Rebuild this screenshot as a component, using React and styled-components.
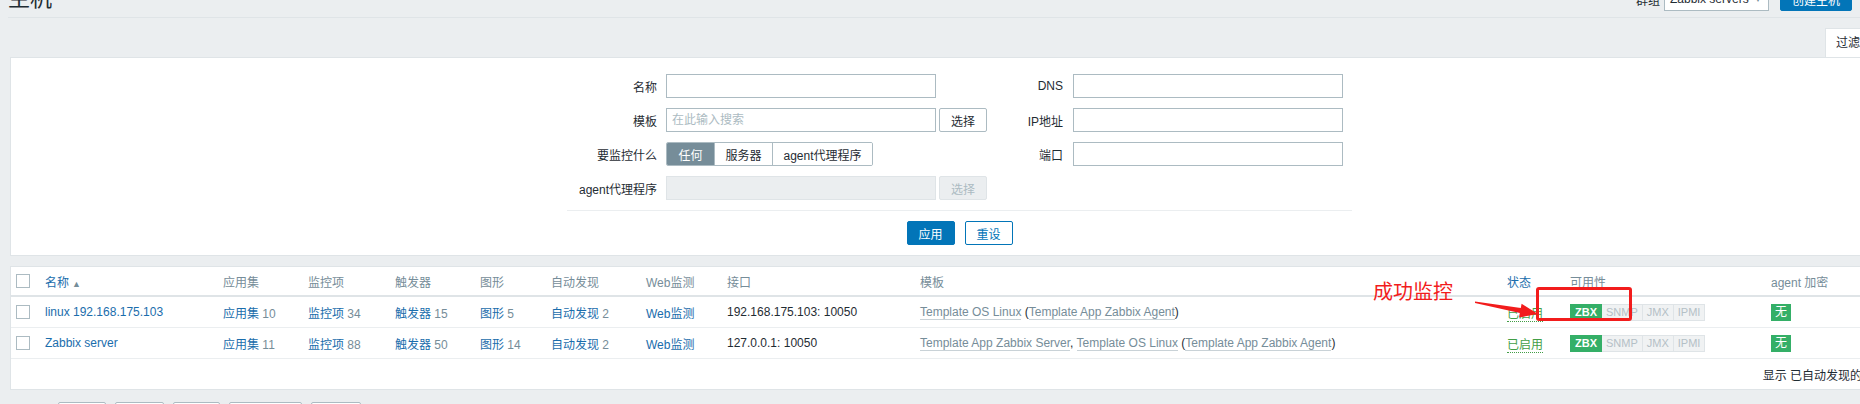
import React from 'react';
import styled, { createGlobalStyle } from 'styled-components';

const GlobalStyle = createGlobalStyle`
  html, body {
    margin: 0;
    padding: 0;
    height: 404px;
    overflow: hidden;
    background: #ebeef0;
  }
  body {
    font-family: "Liberation Sans", Arial, "Noto Sans CJK SC", sans-serif;
    font-size: 12px;
    color: #1f2c33;
  }
  * {
    box-sizing: border-box;
  }
`;

const LINK = '#1a6dac';
const MUTED = '#768d99';
const GREEN = '#34af67';
// column widths of the hosts table, taken from the header positions
const COLUMNS = '29px 178px 85px 87px 85px 71px 95px 81px 193px 587px 63px 201px 1fr';

const Page = styled.div`
  position: relative;
  width: 1860px;
  padding-top: 1px;
  margin-top: -1px;
`;

const Header = styled.div`
  display: flex;
  align-items: center;
  justify-content: space-between;
  height: 24px;
  margin-top: -13px;
  padding: 0 8px;
`;

const Title = styled.h1`
  margin: 0;
  font-size: 22px;
  line-height: 24px;
  font-weight: normal;
  color: #1f2c33;
`;

const HeaderControls = styled.div`
  display: flex;
  align-items: center;
`;

const HeaderLabel = styled.span`
  margin-right: 4px;
`;

const Select = styled.div`
  display: flex;
  align-items: center;
  justify-content: space-between;
  width: 105px;
  height: 24px;
  padding: 0 6px 0 5px;
  background: #fff;
  border: 1px solid #acbbc2;
  span:last-child {
    font-size: 8px;
    color: #768d99;
  }
`;

const PrimaryButton = styled.button`
  margin-left: 11px;
  width: 72px;
  height: 24px;
  border: 1px solid #0275b8;
  border-radius: 2px;
  background: #0275b8;
  color: #fff;
  font: inherit;
  padding: 0;
`;

const TabStrip = styled.div`
  display: flex;
  justify-content: flex-end;
  align-items: flex-end;
  height: 40px;
  margin: 6px 0 0 8px;
  border-top: 1px solid #dfe4e7;
`;

const Tab = styled.div`
  height: 29px;
  line-height: 28px;
  padding: 0 10px;
  margin-right: -11px;
  background: #fff;
  border: 1px solid #dfe4e7;
  border-bottom: none;
`;

const FilterPanel = styled.div`
  margin-left: 10px;
  padding: 16px 0 10px;
  background: #fff;
  border: 1px solid #dfe4e7;
  border-right: none;
`;

const FilterBody = styled.div`
  width: 785px;
  margin-left: 556px;
`;

const FilterColumns = styled.div`
  display: flex;
`;

const FilterColumn = styled.div`
  display: flex;
  flex-direction: column;
  gap: 10px;
  width: ${(p) => p.$width}px;
`;

const FormRow = styled.div`
  display: grid;
  grid-template-columns: ${(p) => p.$label}px auto;
  column-gap: ${(p) => p.$gap}px;
  align-items: center;
  height: 24px;
`;

const FieldLabel = styled.label`
  text-align: right;
  white-space: nowrap;
`;

const ControlGroup = styled.div`
  display: flex;
  gap: 3px;
`;

const TextInput = styled.input`
  width: 270px;
  height: 24px;
  padding: 0 5px;
  font: inherit;
  color: #1f2c33;
  background: ${(p) => (p.disabled ? '#ebeef0' : '#fff')};
  border: 1px solid ${(p) => (p.disabled ? '#dfe4e7' : '#acbbc2')};
  outline: none;
  &::placeholder {
    color: #acbbc2;
  }
`;

const Button = styled.button`
  width: ${(p) => p.$width || 48}px;
  height: 24px;
  padding: 0;
  font: inherit;
  border-radius: 2px;
  background: ${(p) => (p.$primary ? '#0275b8' : p.disabled ? '#ebeef0' : '#fff')};
  color: ${(p) => (p.$primary ? '#fff' : p.disabled ? '#acbbc2' : p.$outline ? '#0275b8' : '#1f2c33')};
  border: 1px solid
    ${(p) => (p.$primary || p.$outline ? '#0275b8' : p.disabled ? '#dfe4e7' : '#acbbc2')};
`;

const Segmented = styled.div`
  display: flex;
  height: 24px;
  border: 1px solid #acbbc2;
  border-radius: 2px;
  width: max-content;
  overflow: hidden;
`;

const SegmentItem = styled.span`
  display: flex;
  align-items: center;
  justify-content: center;
  width: ${(p) => p.$width}px;
  background: ${(p) => (p.$active ? '#768d99' : '#fff')};
  color: ${(p) => (p.$active ? '#fff' : '#1f2c33')};
  & + & {
    border-left: 1px solid #acbbc2;
  }
`;

const Divider = styled.div`
  margin-top: 10px;
  border-top: 1px solid #ebeef0;
`;

const FilterActions = styled.div`
  display: flex;
  justify-content: center;
  gap: 10px;
  padding-top: 10px;
`;

const TablePanel = styled.div`
  margin: 10px 0 0 10px;
  background: #fff;
  border: 1px solid #dfe4e7;
  border-right: none;
`;

const TableRow = styled.div`
  display: grid;
  grid-template-columns: ${COLUMNS};
  align-items: center;
  height: ${(p) => (p.$head ? 30 : 31)}px;
  border-bottom: ${(p) => (p.$head ? '2px solid #dfe4e7' : '1px solid #ebeef0')};
  color: ${(p) => (p.$head ? MUTED : '#1f2c33')};
`;

const Cell = styled.div`
  padding: 0 5px;
  white-space: nowrap;
`;

const Checkbox = styled.span`
  display: block;
  width: 14px;
  height: 14px;
  border: 1px solid #acbbc2;
  background: #fff;
`;

const Link = styled.span`
  color: ${LINK};
`;

const SortArrow = styled.span`
  font-size: 9px;
  margin-left: 3px;
  color: ${MUTED};
`;

const Count = styled.span`
  color: ${MUTED};
`;

const TemplateLink = styled.span`
  color: ${MUTED};
  border-bottom: 1px solid #c9d2d7;
`;

const Status = styled.span`
  color: #429e47;
  border-bottom: 1px dotted #429e47;
`;

const AvailGroup = styled.span`
  display: inline-flex;
`;

const Badge = styled.span`
  display: inline-block;
  height: 17px;
  line-height: 15px;
  padding: 0 4px;
  font-size: 11px;
  font-weight: ${(p) => (p.$on ? 'bold' : 'normal')};
  background: ${(p) => (p.$on ? GREEN : '#f0f2f3')};
  color: ${(p) => (p.$on ? '#fff' : '#b4c0c6')};
  border: 1px solid ${(p) => (p.$on ? GREEN : '#dfe4e7')};
  & + & {
    border-left: none;
  }
`;

const CryptBadge = styled.span`
  display: inline-block;
  height: 17px;
  line-height: 17px;
  padding: 0 4px;
  background: ${GREEN};
  color: #fff;
`;

const Footer = styled.div`
  display: flex;
  justify-content: flex-end;
  align-items: center;
  height: 30px;
  span {
    margin-right: -2px;
    white-space: nowrap;
  }
`;

const ActionBar = styled.div`
  display: flex;
  gap: 9px;
  margin-top: 12px;
  padding-left: 58px;
`;

const Note = styled.div`
  position: absolute;
  left: 1373px;
  top: 280px;
  font-family: "Noto Sans CJK SC", sans-serif;
  font-size: 20px;
  line-height: 24px;
  color: #f21c1c;
`;

const NoteArrow = styled.svg`
  position: absolute;
  left: 1470px;
  top: 298px;
`;

const NoteBox = styled.div`
  position: absolute;
  left: 1536px;
  top: 288px;
  width: 96px;
  height: 34px;
  border: 3px solid #f21c1c;
  border-radius: 3px;
`;

const HOSTS = [
  {
    name: 'linux 192.168.175.103',
    apps: 10,
    items: 34,
    triggers: 15,
    graphs: 5,
    discovery: 2,
    iface: '192.168.175.103: 10050',
    templates: ['Template OS Linux'],
  },
  {
    name: 'Zabbix server',
    apps: 11,
    items: 88,
    triggers: 50,
    graphs: 14,
    discovery: 2,
    iface: '127.0.0.1: 10050',
    templates: ['Template App Zabbix Server', 'Template OS Linux'],
  },
];

function HostRow({ host }) {
  return (
    <TableRow>
      <Cell>
        <Checkbox />
      </Cell>
      <Cell>
        <Link>{host.name}</Link>
      </Cell>
      <Cell>
        <Link>应用集</Link> <Count>{host.apps}</Count>
      </Cell>
      <Cell>
        <Link>监控项</Link> <Count>{host.items}</Count>
      </Cell>
      <Cell>
        <Link>触发器</Link> <Count>{host.triggers}</Count>
      </Cell>
      <Cell>
        <Link>图形</Link> <Count>{host.graphs}</Count>
      </Cell>
      <Cell>
        <Link>自动发现</Link> <Count>{host.discovery}</Count>
      </Cell>
      <Cell>
        <Link>Web监测</Link>
      </Cell>
      <Cell>{host.iface}</Cell>
      <Cell>
        {host.templates.map((t, i) => (
          <React.Fragment key={t}>
            {i > 0 && ', '}
            <TemplateLink>{t}</TemplateLink>
          </React.Fragment>
        ))}{' '}
        (<TemplateLink>Template App Zabbix Agent</TemplateLink>)
      </Cell>
      <Cell>
        <Status>已启用</Status>
      </Cell>
      <Cell>
        <AvailGroup>
          <Badge $on>ZBX</Badge>
          <Badge>SNMP</Badge>
          <Badge>JMX</Badge>
          <Badge>IPMI</Badge>
        </AvailGroup>
      </Cell>
      <Cell>
        <CryptBadge>无</CryptBadge>
      </Cell>
    </TableRow>
  );
}

export default function App() {
  return (
    <Page>
      <GlobalStyle />
      <Header>
        <Title>主机</Title>
        <HeaderControls>
          <HeaderLabel>群组</HeaderLabel>
          <Select>
            <span>Zabbix servers</span>
            <span>▼</span>
          </Select>
          <PrimaryButton>创建主机</PrimaryButton>
        </HeaderControls>
      </Header>

      <TabStrip>
        <Tab>过滤</Tab>
      </TabStrip>

      <FilterPanel>
        <FilterBody>
          <FilterColumns>
            <FilterColumn $width={420}>
              <FormRow $label={90} $gap={9}>
                <FieldLabel>名称</FieldLabel>
                <TextInput />
              </FormRow>
              <FormRow $label={90} $gap={9}>
                <FieldLabel>模板</FieldLabel>
                <ControlGroup>
                  <TextInput placeholder="在此输入搜索" />
                  <Button>选择</Button>
                </ControlGroup>
              </FormRow>
              <FormRow $label={90} $gap={9}>
                <FieldLabel>要监控什么</FieldLabel>
                <Segmented>
                  <SegmentItem $active $width={47}>任何</SegmentItem>
                  <SegmentItem $width={58}>服务器</SegmentItem>
                  <SegmentItem $width={100}>agent代理程序</SegmentItem>
                </Segmented>
              </FormRow>
              <FormRow $label={90} $gap={9}>
                <FieldLabel>agent代理程序</FieldLabel>
                <ControlGroup>
                  <TextInput disabled />
                  <Button disabled>选择</Button>
                </ControlGroup>
              </FormRow>
            </FilterColumn>
            <FilterColumn $width={365}>
              <FormRow $label={76} $gap={10}>
                <FieldLabel>DNS</FieldLabel>
                <TextInput />
              </FormRow>
              <FormRow $label={76} $gap={10}>
                <FieldLabel>IP地址</FieldLabel>
                <TextInput />
              </FormRow>
              <FormRow $label={76} $gap={10}>
                <FieldLabel>端口</FieldLabel>
                <TextInput />
              </FormRow>
            </FilterColumn>
          </FilterColumns>
          <Divider />
          <FilterActions>
            <Button $primary>应用</Button>
            <Button $outline>重设</Button>
          </FilterActions>
        </FilterBody>
      </FilterPanel>

      <TablePanel>
        <TableRow $head>
          <Cell>
            <Checkbox />
          </Cell>
          <Cell>
            <Link>名称</Link>
            <SortArrow>▲</SortArrow>
          </Cell>
          <Cell>应用集</Cell>
          <Cell>监控项</Cell>
          <Cell>触发器</Cell>
          <Cell>图形</Cell>
          <Cell>自动发现</Cell>
          <Cell>Web监测</Cell>
          <Cell>接口</Cell>
          <Cell>模板</Cell>
          <Cell>
            <Link>状态</Link>
          </Cell>
          <Cell>可用性</Cell>
          <Cell>agent 加密</Cell>
        </TableRow>
        {HOSTS.map((h) => (
          <HostRow key={h.name} host={h} />
        ))}
        <Footer>
          <span>显示 已自动发现的</span>
        </Footer>
      </TablePanel>

      <ActionBar>
        <Button>启用</Button>
        <Button $width={49}>禁用</Button>
        <Button $width={47}>导出</Button>
        <Button $width={73}>批量更新</Button>
        <Button $width={50}>删除</Button>
      </ActionBar>

      <Note>成功监控</Note>
      <NoteArrow width="72" height="24" viewBox="0 0 72 24">
        <polygon
          points="5,4.5 50.8,11.1 51.6,6.7 68,17 49,20.5 49.8,16.1 5,6"
          fill="#f21c1c"
        />
      </NoteArrow>
      <NoteBox />
    </Page>
  );
}
